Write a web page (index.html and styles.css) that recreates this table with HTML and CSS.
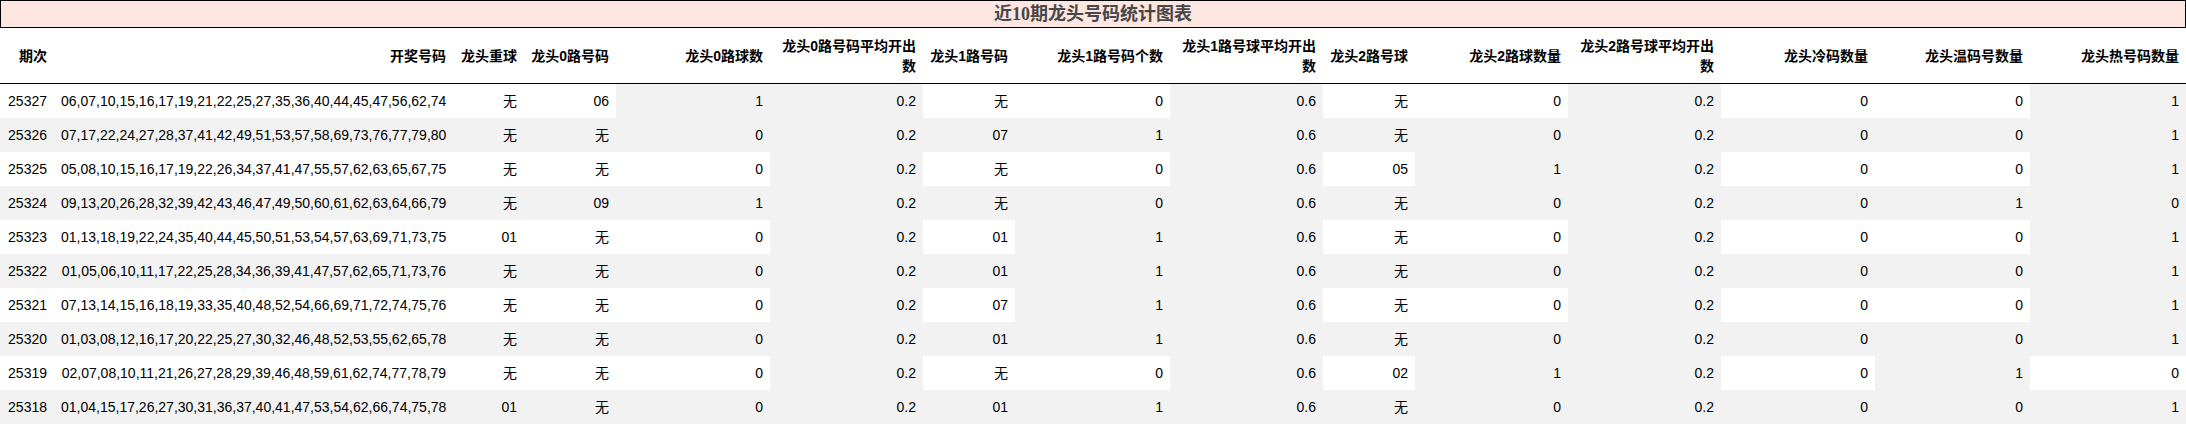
FILE: index.html
```html
<!DOCTYPE html>
<html lang="zh">
<head>
<meta charset="utf-8">
<title>近10期龙头号码统计图表</title>
<link rel="stylesheet" href="styles.css">
</head>
<body>
<div class="title">近10期龙头号码统计图表</div>
<table class="stats">
  <colgroup>
    <col class="c-issue">
    <col class="c-nums">
    <col class="c-rep">
    <col class="c-code">
    <col class="c-w154">
    <col class="c-w153">
    <col class="c-code">
    <col class="c-w155">
    <col class="c-w153">
    <col class="c-code">
    <col class="c-w153">
    <col class="c-w153">
    <col class="c-w154">
    <col class="c-w155">
    <col class="c-w156">
  </colgroup>
  <thead>
    <tr>
      <th>期次</th>
      <th>开奖号码</th>
      <th>龙头重球</th>
      <th>龙头0路号码</th>
      <th>龙头0路球数</th>
      <th>龙头0路号码平均开出数</th>
      <th>龙头1路号码</th>
      <th>龙头1路号码个数</th>
      <th>龙头1路号球平均开出数</th>
      <th>龙头2路号球</th>
      <th>龙头2路球数量</th>
      <th>龙头2路号球平均开出数</th>
      <th>龙头冷码数量</th>
      <th>龙头温码号数量</th>
      <th>龙头热号码数量</th>
    </tr>
  </thead>
  <tbody>
    <tr>
      <td>25327</td><td>06,07,10,15,16,17,19,21,22,25,27,35,36,40,44,45,47,56,62,74</td><td>无</td><td>06</td>
      <td class="bar">1</td><td class="bar">0.2</td><td>无</td><td>0</td><td class="bar">0.6</td><td>无</td><td>0</td><td class="bar">0.2</td><td>0</td><td>0</td><td class="bar">1</td>
    </tr>
    <tr>
      <td>25326</td><td>07,17,22,24,27,28,37,41,42,49,51,53,57,58,69,73,76,77,79,80</td><td>无</td><td>无</td>
      <td>0</td><td class="bar">0.2</td><td>07</td><td class="bar">1</td><td class="bar">0.6</td><td>无</td><td>0</td><td class="bar">0.2</td><td>0</td><td>0</td><td class="bar">1</td>
    </tr>
    <tr>
      <td>25325</td><td>05,08,10,15,16,17,19,22,26,34,37,41,47,55,57,62,63,65,67,75</td><td>无</td><td>无</td>
      <td>0</td><td class="bar">0.2</td><td>无</td><td>0</td><td class="bar">0.6</td><td>05</td><td class="bar">1</td><td class="bar">0.2</td><td>0</td><td>0</td><td class="bar">1</td>
    </tr>
    <tr>
      <td>25324</td><td>09,13,20,26,28,32,39,42,43,46,47,49,50,60,61,62,63,64,66,79</td><td>无</td><td>09</td>
      <td class="bar">1</td><td class="bar">0.2</td><td>无</td><td>0</td><td class="bar">0.6</td><td>无</td><td>0</td><td class="bar">0.2</td><td>0</td><td class="bar">1</td><td>0</td>
    </tr>
    <tr>
      <td>25323</td><td>01,13,18,19,22,24,35,40,44,45,50,51,53,54,57,63,69,71,73,75</td><td>01</td><td>无</td>
      <td>0</td><td class="bar">0.2</td><td>01</td><td class="bar">1</td><td class="bar">0.6</td><td>无</td><td>0</td><td class="bar">0.2</td><td>0</td><td>0</td><td class="bar">1</td>
    </tr>
    <tr>
      <td>25322</td><td>01,05,06,10,11,17,22,25,28,34,36,39,41,47,57,62,65,71,73,76</td><td>无</td><td>无</td>
      <td>0</td><td class="bar">0.2</td><td>01</td><td class="bar">1</td><td class="bar">0.6</td><td>无</td><td>0</td><td class="bar">0.2</td><td>0</td><td>0</td><td class="bar">1</td>
    </tr>
    <tr>
      <td>25321</td><td>07,13,14,15,16,18,19,33,35,40,48,52,54,66,69,71,72,74,75,76</td><td>无</td><td>无</td>
      <td>0</td><td class="bar">0.2</td><td>07</td><td class="bar">1</td><td class="bar">0.6</td><td>无</td><td>0</td><td class="bar">0.2</td><td>0</td><td>0</td><td class="bar">1</td>
    </tr>
    <tr>
      <td>25320</td><td>01,03,08,12,16,17,20,22,25,27,30,32,46,48,52,53,55,62,65,78</td><td>无</td><td>无</td>
      <td>0</td><td class="bar">0.2</td><td>01</td><td class="bar">1</td><td class="bar">0.6</td><td>无</td><td>0</td><td class="bar">0.2</td><td>0</td><td>0</td><td class="bar">1</td>
    </tr>
    <tr>
      <td>25319</td><td>02,07,08,10,11,21,26,27,28,29,39,46,48,59,61,62,74,77,78,79</td><td>无</td><td>无</td>
      <td>0</td><td class="bar">0.2</td><td>无</td><td>0</td><td class="bar">0.6</td><td>02</td><td class="bar">1</td><td class="bar">0.2</td><td>0</td><td class="bar">1</td><td>0</td>
    </tr>
    <tr>
      <td>25318</td><td>01,04,15,17,26,27,30,31,36,37,40,41,47,53,54,62,66,74,75,78</td><td>01</td><td>无</td>
      <td>0</td><td class="bar">0.2</td><td>01</td><td class="bar">1</td><td class="bar">0.6</td><td>无</td><td>0</td><td class="bar">0.2</td><td>0</td><td>0</td><td class="bar">1</td>
    </tr>
  </tbody>
</table>
</body>
</html>
```

FILE: styles.css
```css
html, body {
  margin: 0;
  padding: 0;
  background: #ffffff;
}

body {
  font-family: "Liberation Sans", "Noto Sans CJK SC", sans-serif;
  font-size: 14px;
  color: #000;
}

.title {
  box-sizing: border-box;
  height: 28px;
  border: 1px solid #000;
  background: #fde5e0;
  color: #474747;
  font-family: "Liberation Serif", "Noto Sans CJK SC", serif;
  font-weight: bold;
  font-size: 18px;
  line-height: 26px;
  text-align: center;
}

.stats {
  width: 2186px;
  table-layout: fixed;
  border-collapse: collapse;
  border-spacing: 0;
}

.c-issue { width: 54px; }
.c-nums { width: 399px; }
.c-rep { width: 71px; }
.c-code { width: 92px; }
.c-w153 { width: 153px; }
.c-w154 { width: 154px; }
.c-w155 { width: 155px; }
.c-w156 { width: 156px; }

.stats th,
.stats td {
  text-align: right;
  vertical-align: middle;
  padding: 0 7px;
  white-space: normal;
}

.stats thead th {
  height: 55px;
  font-weight: bold;
  line-height: 20px;
  border-bottom: 1px solid #000;
}

.stats tbody td {
  height: 34px;
  line-height: 20px;
  white-space: nowrap;
}

.stats tbody tr:nth-child(even) {
  background: #f2f2f2;
}

.stats tbody td.bar {
  background: #f2f2f2;
}
```
